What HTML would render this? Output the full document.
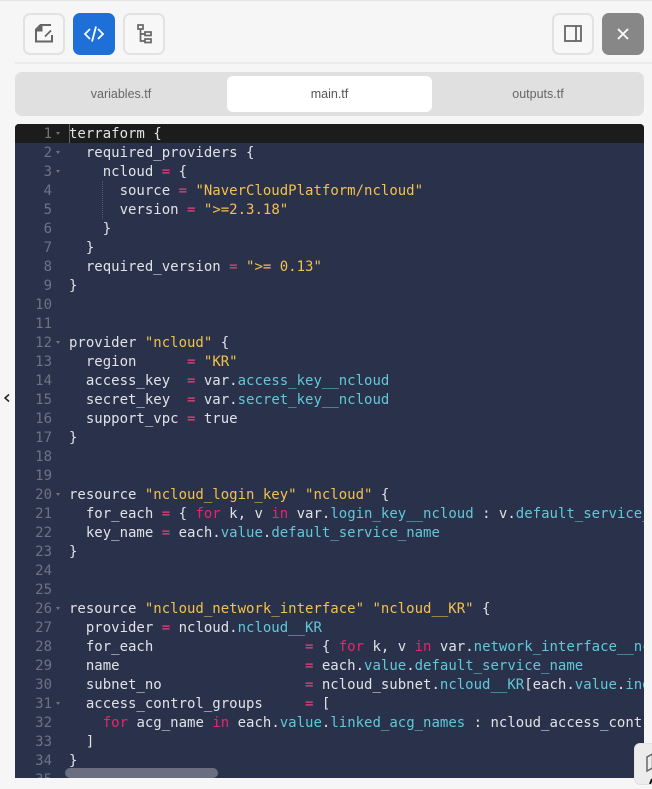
<!DOCTYPE html>
<html><head><meta charset="utf-8">
<style>
html,body{margin:0;padding:0;width:652px;height:786px;overflow:hidden;background:#f6f6f6;font-family:"Liberation Sans",sans-serif}
.abs{position:absolute;box-sizing:border-box}
.btn{top:13px;width:42px;height:42px;border:2px solid #e2e2e2;border-radius:7px;background:#f7f7f7}
.tab{top:76px;height:36px;line-height:36px;text-align:center;font-size:12.500px;color:#666}
#ed{left:15px;top:124px;width:629px;height:654px;background:#2a314b;border-radius:4px 4px 0 0;overflow:hidden;font-family:"DejaVu Sans Mono",monospace;font-size:14px;line-height:19px;color:#e0e2e6}
#hl{left:0;top:0;width:629px;height:19px;background:#1c1c1c}
#nums{left:0;top:1px;width:37px;text-align:right;color:#6e7384;white-space:pre}
#code{left:54px;top:1px;white-space:pre;color:#e0e2e6}
.k{color:#e6256f}.s{color:#f2c14e}.c{color:#5fc9d8}.p{color:#e8457f}
.f{left:41px;width:0;height:0;border-left:2.500px solid transparent;border-right:2.500px solid transparent;border-top:3px solid #6e7384}
</style></head><body>
<div class="abs" style="left:0;top:0;width:652px;height:1px;background:#e4e4e4"></div>
<div class="abs" style="left:15px;top:62px;width:637px;height:2px;background:#ebebeb"></div>

<div class="abs btn" style="left:23px"><svg width="38" height="38" viewBox="0 0 38 38" fill="none" stroke="#666" stroke-width="2"><path d="M26 10H15.500L11 14.500V26.500H27V20"/><path d="M11.500 15.500H16.500V10" fill="#666"/><path d="M20 21.500L26 15.500" stroke-width="1.800"/></svg></div>
<div class="abs" style="left:73px;top:13px;width:42px;height:42px;border-radius:7px;background:#1f6fd8"><svg width="42" height="42" viewBox="0 0 42 42" fill="none" stroke="#fff" stroke-width="1.800"><path d="M17 16L12 21L17 26M25 16L30 21L25 26M23 13.500L19 28.500"/></svg></div>
<div class="abs btn" style="left:123px"><svg width="38" height="38" viewBox="0 0 38 38" fill="none" stroke="#666" stroke-width="1.700"><rect x="13" y="10" width="5" height="4"/><rect x="20" y="17" width="6" height="3.500"/><rect x="20" y="24" width="6" height="3.500"/><path d="M15.500 14V26H20M15.500 19H20"/></svg></div>
<div class="abs btn" style="left:552px"><svg width="38" height="38" viewBox="0 0 38 38" fill="none" stroke="#666" stroke-width="1.800"><rect x="11" y="11" width="16" height="15"/><path d="M22 11V26"/></svg></div>
<div class="abs" style="left:602px;top:13px;width:42px;height:42px;border-radius:7px;background:#878787"><svg width="42" height="42" viewBox="0 0 42 42" fill="none" stroke="#fff" stroke-width="1.800"><path d="M16 16L26 26M26 16L16 26"/></svg></div>

<div class="abs" style="left:15px;top:72px;width:629px;height:44px;background:#e0e0e0;border-radius:7px"></div>
<div class="abs tab" style="left:19px;width:204px">variables.tf</div>
<div class="abs tab" style="left:227px;width:205px;background:#fff;border-radius:6px;color:#555">main.tf</div>
<div class="abs tab" style="left:436px;width:204px">outputs.tf</div>

<svg class="abs" style="left:3px;top:393px" width="8" height="10" viewBox="0 0 8 10" fill="none" stroke="#222" stroke-width="1.500"><path d="M6 1.500L2 5L6 8.500"/></svg>

<div class="abs" id="ed">
<div class="abs" id="hl"></div>
<div class="abs" style="left:54px;top:0;width:1px;height:19px;background:#666"></div>
<div class="abs" style="left:87px;top:57px;width:0;height:38px;border-left:1px dotted #555b70"></div>
<div class="abs" id="nums">1
2
3
4
5
6
7
8
9
10
11
12
13
14
15
16
17
18
19
20
21
22
23
24
25
26
27
28
29
30
31
32
33
34
35</div>
<div class="abs f" style="top:8px"></div><div class="abs f" style="top:27px"></div><div class="abs f" style="top:46px"></div>
<div class="abs f" style="top:217px"></div><div class="abs f" style="top:369px"></div><div class="abs f" style="top:483px"></div><div class="abs f" style="top:578px"></div>
<div class="abs" id="code">terraform {
  required_providers {
    ncloud <span class="p">=</span> {
      source <span class="p">=</span> <span class="s">"NaverCloudPlatform/ncloud"</span>
      version <span class="p">=</span> <span class="s">"&gt;=2.3.18"</span>
    }
  }
  required_version <span class="p">=</span> <span class="s">"&gt;= 0.13"</span>
}


provider <span class="s">"ncloud"</span> {
  region      <span class="p">=</span> <span class="s">"KR"</span>
  access_key  <span class="p">=</span> var.<span class="c">access_key__ncloud</span>
  secret_key  <span class="p">=</span> var.<span class="c">secret_key__ncloud</span>
  support_vpc <span class="p">=</span> true
}


resource <span class="s">"ncloud_login_key"</span> <span class="s">"ncloud"</span> {
  for_each <span class="p">=</span> { <span class="k">for</span> k, v <span class="k">in</span> var.<span class="c">login_key__ncloud</span> : v.<span class="c">default_service_name</span>
  key_name <span class="p">=</span> each.<span class="c">value</span>.<span class="c">default_service_name</span>
}


resource <span class="s">"ncloud_network_interface"</span> <span class="s">"ncloud__KR"</span> {
  provider <span class="p">=</span> ncloud.<span class="c">ncloud__KR</span>
  for_each                  <span class="p">=</span> { <span class="k">for</span> k, v <span class="k">in</span> var.<span class="c">network_interface__ncloud</span>
  name                      <span class="p">=</span> each.<span class="c">value</span>.<span class="c">default_service_name</span>
  subnet_no                 <span class="p">=</span> ncloud_subnet.<span class="c">ncloud__KR</span>[each.<span class="c">value</span>.<span class="c">index</span>
  access_control_groups     <span class="p">=</span> [
    <span class="k">for</span> acg_name <span class="k">in</span> each.<span class="c">value</span>.<span class="c">linked_acg_names</span> : ncloud_access_control
  ]
}</div>
<div class="abs" style="left:50px;top:644px;width:153px;height:10px;background:#6a6e80;border-radius:5px"></div>
</div>

<div class="abs" style="left:634px;top:743px;width:30px;height:42px;background:#ececec;border:1px solid #e2e2e2;border-radius:6px"><svg width="18" height="40" viewBox="0 0 18 40" fill="none" stroke="#666" stroke-width="1.500"><path d="M17.500 10V24L12 27V13L17.500 10Z"/><path d="M17 35L15 40" stroke="#111" stroke-width="2"/></svg></div>
</body></html>
